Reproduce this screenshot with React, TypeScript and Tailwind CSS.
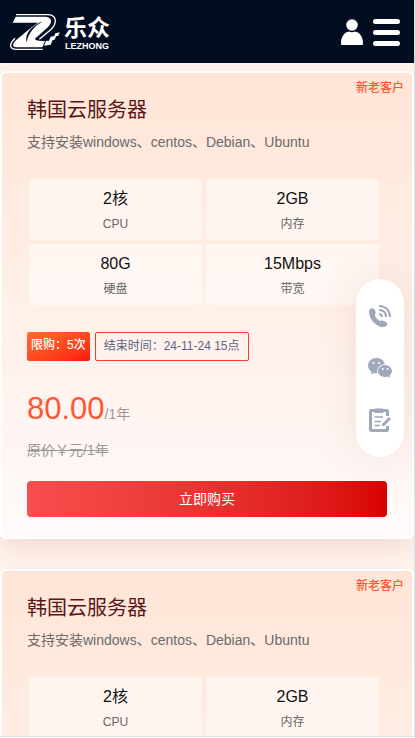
import React from 'react';

const specs = [
  { value: '2核', label: 'CPU' },
  { value: '2GB', label: '内存' },
  { value: '80G', label: '硬盘' },
  { value: '15Mbps', label: '带宽' },
];

function Logo() {
  return (
    <a href="#" aria-label="乐众" className="flex items-center gap-1 text-white">
      <svg width="50" height="38" viewBox="0 0 150 114" fill="none">
        <path
          d="M17 11 H104 C126 11 130 28 112 44 L74 78 C80 84 92 84 105 84 L97 103 H20 C3 103 8 89 22 78 C40 64 56 48 84 29 H8 Z"
          fill="#fff"
        />
        <path d="M94 27 C68 38 44 60 50 86 C54 62 70 42 94 27 Z" fill="#020d22" stroke="#020d22" strokeWidth="1" />
        <path d="M18 5 H112 C142 5 142 32 122 50 L88 79" stroke="#fff" strokeWidth="4" />
        <path d="M15 76 C-4 94 -2 109 20 109 H98" stroke="#fff" strokeWidth="4" />
        <path
          d="M108 84 l20-3 -6 14 -20 3z M122 71 l17-3 -5 12 -17 3z M136 61 l13-3 -4 10 -13 3z"
          fill="#fff"
        />
      </svg>
      <span className="flex flex-col items-center pt-0.5 font-['Liberation_Sans','Noto_Sans_CJK_SC',sans-serif]">
        <span className="text-[23px] leading-[26px] font-bold">乐众</span>
        <span className="text-[9px] leading-[10px] font-bold">LEZHONG</span>
      </span>
    </a>
  );
}

function Header() {
  return (
    <header className="flex h-[63px] items-center justify-between bg-[#020d22] pr-[14px] pl-[10px]">
      <Logo />
      <div className="flex items-center gap-[10px]">
        <button type="button" aria-label="用户" className="block">
          <svg width="22" height="26" viewBox="0 0 22 26" fill="#fff">
            <circle cx="11" cy="6" r="5.800" />
            <path d="M1 26 C0 26 0 25 0 24 C0 17 4 13 8 12.400 Q11 14 14 12.400 C18 13 22 17 22 24 C22 25 22 26 21 26 Z" />
          </svg>
        </button>
        <button type="button" aria-label="菜单" className="block">
          <svg width="27" height="28" viewBox="0 0 27 28" fill="#fff">
            <rect y="1" width="27" height="5" rx="2.500" />
            <rect y="12" width="27" height="5" rx="2.500" />
            <rect y="23" width="27" height="5" rx="2.500" />
          </svg>
        </button>
      </div>
    </header>
  );
}

function ServerCard() {
  return (
    <article className="relative rounded-md border-2 border-white bg-linear-to-b from-[#ffe5d6] to-[#fffafa] px-[25px] pt-[25px] pb-5 shadow-[0_10px_22px_-4px_rgba(140,80,50,0.15)]">
      <span className="absolute top-[5px] right-2 text-xs leading-5 font-medium text-[#ff5633]">新老客户</span>
      <h2 className="text-xl leading-6 text-[#5a1616]">韩国云服务器</h2>
      <p className="mt-2 text-sm leading-6 text-[#6b6b6b]">支持安装windows、centos、Debian、Ubuntu</p>
      <dl className="mt-[25px] grid grid-cols-2 gap-1 pr-2 pl-0.5 text-center">
        {specs.map((s) => (
          <div key={s.label} className="flex h-[61px] flex-col-reverse justify-center gap-[3px] rounded-sm bg-white/50 pt-0.5">
            <dt className="text-xs leading-5 text-[#666]">{s.label}</dt>
            <dd className="text-base leading-6 text-[#111]">{s.value}</dd>
          </div>
        ))}
      </dl>
      <div className="mt-[27px] flex gap-[5px] text-xs">
        <span className="h-[29px] rounded-xs bg-linear-to-br from-[#ff6b2e] to-[#fb0d0d] px-1 leading-[26px] font-medium text-white">
          限购：5次
        </span>
        <span className="h-[29px] rounded-xs border border-[#ff3b25] px-2 leading-[27px] text-[#5d6685]">
          结束时间：24-11-24 15点
        </span>
      </div>
      <p className="mt-7 text-sm leading-10 text-[#999]">
        <span className="text-[31px] text-[#ff5633]">80.00</span>/1年
      </p>
      <p className="mt-1 text-sm leading-6 text-[#999] line-through">原价￥元/1年</p>
      <button
        type="button"
        className="mt-[19px] block h-9 w-full rounded-sm bg-linear-to-r from-[#f84e4e] to-[#d80000] text-sm text-white"
      >
        立即购买
      </button>
    </article>
  );
}

function ContactBar() {
  return (
    <nav
      aria-label="联系我们"
      className="fixed top-[279px] right-[11px] flex h-[178px] w-12 flex-col items-center justify-center gap-7 rounded-full bg-white text-[#9fa9b9] shadow-[0_0_40px_rgba(120,80,60,0.12)]"
    >
      <button type="button" aria-label="电话">
        <svg width="24" height="24" viewBox="0 0 24 24" fill="none">
          <path
            d="M2 5 C3 4 5 4 6 5 C8 7 8 9 7 11 C7 13 10 16 12 17 C14 16 17 17 19 19 C20 21 18 23 15 23 C8 23 1 15 1 8 C1 6 1 6 2 5 Z"
            fill="currentColor"
          />
          <path d="M11 2 C18 2 22 7 22 13 M11 6 C16 6 18 9 18 13 M11 10 C14 10 14 12 14 13" stroke="currentColor" strokeWidth="2" />
        </svg>
      </button>
      <button type="button" aria-label="微信">
        <svg width="24" height="24" viewBox="0 0 24 24" fill="currentColor">
          <path d="M8.500 2 C4 2 0 5 0 9.500 C0 12 1.300 14.500 3.500 15.800 L3 18.500 L6 17 L9.500 17.300 C8.500 12 12 8.300 16.800 8.200 C16 4.500 13 2 8.500 2 Z" />
          <path d="M17 9 C13 9 10 12 10 15.300 C10 18.500 13 21 17 21 C18 21 19 20.800 19.800 20.500 L22 22 L21.600 19.500 C23 18.500 24 17 24 15.300 C24 12 21 9 17 9 Z" />
          <g fill="#fff">
            <circle cx="5.500" cy="7" r="1" />
            <circle cx="11" cy="7" r="1" />
            <circle cx="14.800" cy="13" r="0.900" />
            <circle cx="19.500" cy="13" r="0.900" />
          </g>
        </svg>
      </button>
      <button type="button" aria-label="留言">
        <svg width="24" height="24" viewBox="0 0 24 24" fill="none" stroke="currentColor">
          <path d="M7 2.500 H3.500 Q2.500 2.500 2.500 3.500 V21.500 Q2.500 22.500 3.500 22.500 H18.500 Q19.500 22.500 19.500 21.500 V18 M15 2.500 H18.500 Q19.500 2.500 19.500 3.500 V8" strokeWidth="3" />
          <path d="M7 1 H15 V4.500 H7 Z" fill="currentColor" strokeWidth="1" />
          <path d="M6.500 9 H15 M6.500 13.500 H13 M6.500 17.500 H12" strokeWidth="1.600" />
          <path d="M14.500 17.500 L22 10" strokeWidth="3" />
        </svg>
      </button>
    </nav>
  );
}

export default function App() {
  return (
    <div className="h-screen overflow-hidden bg-[#f7f9fa] pb-px font-['Liberation_Sans','Noto_Sans_CJK_SC',sans-serif]">
      <div className="h-full overflow-hidden border-r border-b border-[#dfe1e3] bg-[#fff1eb]">
        <Header />
        <main className="mt-2 flex flex-col gap-[30px]">
          <ServerCard />
          <ServerCard />
        </main>
      </div>
      <ContactBar />
    </div>
  );
}
